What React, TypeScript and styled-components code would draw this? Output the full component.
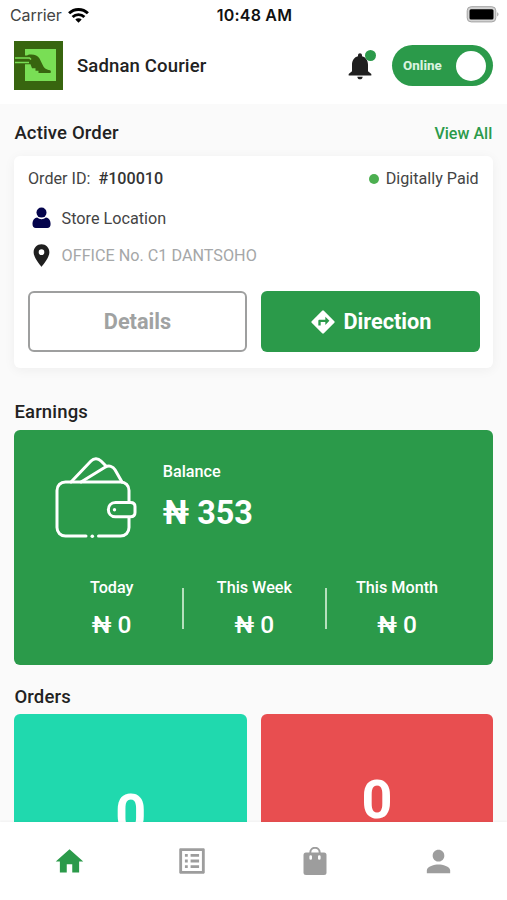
import React from 'react';
import styled, { createGlobalStyle } from 'styled-components';

const GREEN = '#2b9a4a';

const Global = createGlobalStyle`
  * { box-sizing: border-box; }
  html, body { margin: 0; padding: 0; background: #fafafa; }
  body { font-family: Roboto, "Noto Sans", sans-serif; color: #222; overflow: hidden; }
  button { font-family: inherit; margin: 0; padding: 0; cursor: pointer; }
  svg { display: block; flex: none; }
`;

const Screen = styled.div`
  width: 507px;
  height: 900px;
  display: flex;
  flex-direction: column;
  overflow: hidden;
  background: #fafafa;
`;

const StatusBar = styled.div`
  height: 30px;
  flex: none;
  display: grid;
  grid-template-columns: 1fr auto 1fr;
  align-items: center;
  padding: 0 8px 0 10px;
  background: #fff;
  font-family: Inter, sans-serif;
  font-size: 16px;
  line-height: 30px;
  color: #111;
`;

const Carrier = styled.div`
  display: flex;
  align-items: center;
  gap: 6px;
  color: #444;
  letter-spacing: -0.1px;
`;

const Clock = styled.div`
  font-weight: 600;
  letter-spacing: 0.2px;
`;

const BatterySlot = styled.div`
  justify-self: end;
  margin-top: -1px;
`;

const Header = styled.header`
  height: 74px;
  flex: none;
  display: flex;
  align-items: center;
  padding: 0 14px 3px 14px;
  background: #fff;
`;

const CourierName = styled.div`
  margin-left: 14px;
  flex: 1;
  font-size: 18.5px;
  font-weight: 500;
  line-height: 24px;
  letter-spacing: 0.15px;
`;

const BellButton = styled.button`
  position: relative;
  width: 32px;
  height: 32px;
  border: 0;
  background: none;
  margin-right: 16px;
`;

const BellDot = styled.span`
  position: absolute;
  top: 0;
  right: 0;
  width: 11px;
  height: 11px;
  border-radius: 50%;
  background: ${GREEN};
`;

const Toggle = styled.button`
  display: flex;
  align-items: center;
  justify-content: space-between;
  width: 101px;
  height: 41px;
  padding: 0 7px 0 11px;
  border: 0;
  border-radius: 21px;
  background: ${GREEN};
  color: #d9f2df;
  font-size: 13.4px;
  font-weight: 800;
`;

const Knob = styled.span`
  width: 30px;
  height: 30px;
  border-radius: 50%;
  background: #fff;
`;

const Content = styled.main`
  flex: 1;
  min-height: 0;
  overflow: hidden;
  padding: 0 13.7px 0 14.4px;
`;

const SectionHead = styled.div<{ $top: number; $bottom: number }>`
  display: flex;
  justify-content: space-between;
  align-items: center;
  height: 24px;
  padding-right: 1px;
  margin-top: ${(p) => p.$top}px;
  margin-bottom: ${(p) => p.$bottom}px;
`;

const SectionTitle = styled.h2`
  margin: 0;
  font-size: 18.5px;
  font-weight: 500;
  line-height: 24px;
  letter-spacing: 0.16px;
`;

const ViewAll = styled.a`
  font-size: 16.1px;
  font-weight: 500;
  color: ${GREEN};
`;

const OrderCard = styled.section`
  height: 212px;
  padding: 11px 13.4px 0 13.6px;
  border-radius: 6px;
  background: #fff;
  box-shadow: 0 2px 12px rgba(0, 0, 0, 0.05);
`;

const OrderTop = styled.div`
  display: flex;
  align-items: center;
  justify-content: space-between;
  height: 23px;
  padding-right: 1.2px;
  font-size: 16.15px;
  color: #444;
`;

const OrderId = styled.span`
  margin-left: 8px;
  font-weight: 500;
  color: #333;
`;

const Paid = styled.div`
  display: flex;
  align-items: center;
  gap: 7px;
`;

const PaidDot = styled.span`
  width: 10px;
  height: 10px;
  border-radius: 50%;
  background: #4caf50;
`;

const InfoRow = styled.div<{ $muted?: boolean; $top: number }>`
  display: flex;
  align-items: center;
  height: 24px;
  margin-top: ${(p) => p.$top}px;
  gap: 6.6px;
  font-size: 16.2px;
  color: ${(p) => (p.$muted ? '#a5a7a8' : '#444')};
`;

const Actions = styled.div`
  display: grid;
  grid-template-columns: 219px 219px;
  justify-content: space-between;
  margin-top: 24px;
`;

const Action = styled.button<{ $filled?: boolean }>`
  display: flex;
  align-items: center;
  justify-content: center;
  gap: 6px;
  height: 61px;
  border-radius: 6px;
  border: ${(p) => (p.$filled ? '0' : '2px solid #9e9f9f')};
  background: ${(p) => (p.$filled ? GREEN : '#fff')};
  color: ${(p) => (p.$filled ? '#fff' : '#a0a2a2')};
  font-size: 21.7px;
  font-weight: 700;
`;

const EarningsCard = styled.section`
  height: 235px;
  padding: 25px 26px 0 27px;
  border-radius: 6px;
  background: ${GREEN};
  color: #fff;
`;

const BalanceRow = styled.div`
  display: flex;
  height: 90px;
  padding-left: 11.400px;
  gap: 26px;
`;

const BalanceLabel = styled.div`
  margin-top: 7px;
  font-size: 16.2px;
  font-weight: 500;
  line-height: 20px;
`;

const BalanceValue = styled.div`
  margin-top: 11px;
  font-size: 32.4px;
  font-weight: 700;
  line-height: 40px;
`;

const Stats = styled.div`
  display: flex;
  align-items: center;
  margin-top: 28px;
  height: 70px;
`;

const Stat = styled.div`
  flex: 1;
  text-align: center;
`;

const StatLabel = styled.div`
  margin-top: 1px;
  font-size: 16.200px;
  font-weight: 500;
  line-height: 20px;
`;

const StatValue = styled.div`
  margin-top: 13px;
  font-size: 24.5px;
  font-weight: 500;
  line-height: 28px;
`;

const Divider = styled.div`
  width: 2px;
  height: 41px;
  background: #b5e0bd;
`;

const OrdersGrid = styled.div`
  display: grid;
  grid-template-columns: 232.500px 232.500px;
  justify-content: space-between;
`;

const OrdersTile = styled.div<{ $color: string; $top: number }>`
  height: 200px;
  padding-top: ${(p) => p.$top}px;
  border-radius: 6px;
  background: ${(p) => p.$color};
  color: #fff;
  font-size: 54px;
  font-weight: 700;
  line-height: 60px;
  text-align: center;
`;

const Nav = styled.nav`
  height: 78px;
  flex: none;
  display: grid;
  grid-template-columns: repeat(4, 123px);
  justify-content: center;
  background: #fff;
  box-shadow: 0 -1px 2px rgba(0, 0, 0, 0.04);
`;

const NavItem = styled.button<{ $active?: boolean }>`
  display: flex;
  justify-content: center;
  align-items: center;
  border: 0;
  background: none;
  color: ${(p) => (p.$active ? GREEN : '#9d9d9d')};
`;

const Icon = ({ d, size = 32, color = 'currentColor' }: { d: string; size?: number; color?: string }) => (
  <svg width={size} height={size} viewBox="0 0 24 24" fill={color} fillRule="evenodd">
    <path d={d} />
  </svg>
);

const BELL = 'M12 22c1.1 0 2-.9 2-2h-4c0 1.1.89 2 2 2zm6-6v-5c0-3.07-1.64-5.64-4.5-6.32V4c0-.83-.67-1.5-1.5-1.5s-1.5.67-1.5 1.5v.68C7.63 5.36 6 7.92 6 11v5l-2.500 2v1.200h17v-1.200l-2.500-2z';
const PIN = 'M12 2C8.13 2 5 5.13 5 9c0 5.25 7 13 7 13s7-7.75 7-13c0-3.87-3.13-7-7-7zm0 9.5a2.5 2.5 0 1 1 0-5 2.5 2.5 0 0 1 0 5z';
const DIRECTIONS = 'M21.71 11.29l-9-9a.996.996 0 0 0-1.41 0l-9 9a.996.996 0 0 0 0 1.41l9 9c.39.39 1.02.39 1.41 0l9-9a.996.996 0 0 0 0-1.41zM14 14.5V12h-4v3H8v-4c0-.55.45-1 1-1h5V7.5l3.5 3.5-3.5 3.5z';
const HOME = 'M10 20v-6h4v6h5v-8h3L12 3 2 12h3v8z';
const PERSON = 'M12 12c2.21 0 4-1.79 4-4s-1.79-4-4-4-4 1.79-4 4 1.79 4 4 4zm0 2c-2.67 0-8 1.34-8 4v2h16v-2c0-2.66-5.33-4-8-4z';
const LIST = 'M19 5v14H5V5h14m1.1-2H3.9c-.5 0-.9.4-.9.9v16.2c0 .4.4.9.9.9h16.2c.4 0 .9-.5.9-.9V3.9c0-.5-.5-.9-.9-.9zM11 7h6v2h-6V7zm0 4h6v2h-6v-2zm0 4h6v2h-6v-2zM7 7h2v2H7zm0 4h2v2H7zm0 4h2v2H7z';

const Logo = () => (
  <svg width="49" height="49" viewBox="0 0 49 49">
    <rect width="49" height="49" fill="#38650f" />
    <path d="M11 8h31v32H11z" fill="#79de55" />
    <path
      d="M0 14.500h13l2-1c5-.5 8.500.5 10.500 4l3.200 6.500c1.300 3 3 4.600 7.500 5.300.9.700.9 2.700 0 2.700H24.500v-2.200h-3v-2.600H18l-1.500-4H0z"
      fill="#38650f"
    />
    <path d="M1 17h14.500l1.500 1.500M1 21.500h14" stroke="#79de55" strokeWidth="1.500" fill="none" />
  </svg>
);

const Wifi = () => (
  <svg width="21" height="15" viewBox="0 0 21 15" fill="none" stroke="#000" strokeWidth="2.9">
    <path d="M1.1 5.3a13.4 13.4 0 0 1 18.8 0" />
    <path d="M4.6 9a8.4 8.4 0 0 1 11.8 0" />
    <path d="M10.5 14.8 7.3 11.6a4.5 4.5 0 0 1 6.4 0z" fill="#000" stroke="none" />
  </svg>
);

const Battery = () => (
  <svg width="33" height="17" viewBox="0 0 33 17">
    <rect x="1.200" y=".7" width="28.600" height="15.200" rx="4" fill="#d4d4d4" stroke="#a3a3a3" />
    <rect x="3.500" y="3.200" width="24" height="10.200" rx="1.500" fill="#000" />
    <path d="M31.300 6.200c1.500.6 1.500 3.600 0 4.200z" fill="#999" />
  </svg>
);

const StoreUser = () => (
  <svg width="27" height="24" viewBox="0 0 27 24" fill="#04044c">
    <path d="M9.2 11.4c-3.4.3-4.7 3.4-4.7 6.6 0 2.5 1.2 4 3.4 4h11.3c2.200 0 3.400-1.500 3.400-4 0-3.200-1.300-6.300-4.700-6.600a6.300 6.300 0 0 1-8.700 0z" />
    <circle cx="13.500" cy="6.600" r="5" />
  </svg>
);

const Wallet = () => (
  <svg width="84" height="84" viewBox="0 0 84 84" fill="none" stroke="#fff" strokeWidth="3" strokeLinecap="round" strokeLinejoin="round">
    <path d="M76 51v-15.500c0-5-3.500-8.500-8.500-8.500H12.500c-5 0-8.500 3.500-8.500 8.500V72.500c0 5 3.500 8.500 8.500 8.500H33M45.500 81h22c5 0 8.500-3.500 8.500-8.500V62" />
    <path d="M18 27 38 6c3-3.200 7-3 10 0l5 5M28 27l24-14.700c4-2.400 8-1 10 2.500L69 27" />
    <path d="M62.500 47.500h15c3 0 4.500 1.500 4.500 4v6c0 2.800-1.500 4.300-4.500 4.300h-15c-9.500 0-9.500-14.300 0-14.300z" fill={GREEN} />
    <circle cx="61.500" cy="54.700" r="1.700" fill="#fff" stroke="none" />
    <circle cx="39.300" cy="81.300" r="1.800" fill="#fff" stroke="none" />
  </svg>
);

const Bag = () => (
  <svg width="24" height="28" viewBox="0 0 24 28">
    <path d="M7.300 7V5.500a4.700 4.700 0 0 1 9.400 0V7" fill="none" stroke="currentColor" strokeWidth="2" />
    <rect x=".5" y="5.500" width="23" height="22.500" rx="2.500" fill="currentColor" />
    <path d="M7.700 9.500v2M16.300 9.500v2" stroke="#fff" strokeWidth="2.600" strokeLinecap="round" />
  </svg>
);

const stats = [
  { label: 'Today', value: '₦ 0' },
  { label: 'This Week', value: '₦ 0' },
  { label: 'This Month', value: '₦ 0' },
];

export default function App() {
  return (
    <Screen>
      <Global />
      <StatusBar>
        <Carrier>
          Carrier <Wifi />
        </Carrier>
        <Clock>10:48 AM</Clock>
        <BatterySlot>
          <Battery />
        </BatterySlot>
      </StatusBar>
      <Header>
        <Logo />
        <CourierName>Sadnan Courier</CourierName>
        <BellButton aria-label="Notifications">
          <Icon d={BELL} size={32} color="#1f1f1f" />
          <BellDot />
        </BellButton>
        <Toggle>
          Online
          <Knob />
        </Toggle>
      </Header>
      <Content>
        <SectionHead $top={17} $bottom={11}>
          <SectionTitle>Active Order</SectionTitle>
          <ViewAll>View All</ViewAll>
        </SectionHead>
        <OrderCard>
          <OrderTop>
            <div>
              Order ID:<OrderId>#100010</OrderId>
            </div>
            <Paid>
              <PaidDot />
              Digitally Paid
            </Paid>
          </OrderTop>
          <InfoRow $top={16}>
            <StoreUser />
            Store Location
          </InfoRow>
          <InfoRow $muted $top={13}>
            <Icon d={PIN} size={27} color="#1f1f1f" />
            OFFICE No. C1 DANTSOHO
          </InfoRow>
          <Actions>
            <Action>Details</Action>
            <Action $filled>
              <Icon d={DIRECTIONS} size={28} />
              Direction
            </Action>
          </Actions>
        </OrderCard>
        <SectionHead $top={32} $bottom={6}>
          <SectionTitle>Earnings</SectionTitle>
        </SectionHead>
        <EarningsCard>
          <BalanceRow>
            <Wallet />
            <div>
              <BalanceLabel>Balance</BalanceLabel>
              <BalanceValue>₦ 353</BalanceValue>
            </div>
          </BalanceRow>
          <Stats>
            {stats.map((s, i) => (
              <React.Fragment key={s.label}>
                {i > 0 && <Divider />}
                <Stat>
                  <StatLabel>{s.label}</StatLabel>
                  <StatValue>{s.value}</StatValue>
                </Stat>
              </React.Fragment>
            ))}
          </Stats>
        </EarningsCard>
        <SectionHead $top={20} $bottom={5}>
          <SectionTitle>Orders</SectionTitle>
        </SectionHead>
        <OrdersGrid>
          <OrdersTile $color="#20d9ae" $top={70}>0</OrdersTile>
          <OrdersTile $color="#e84e50" $top={56}>0</OrdersTile>
        </OrdersGrid>
      </Content>
      <Nav>
        <NavItem $active aria-label="Home">
          <Icon d={HOME} size={33} />
        </NavItem>
        <NavItem aria-label="Requests">
          <Icon d={LIST} size={34} />
        </NavItem>
        <NavItem aria-label="Orders">
          <Bag />
        </NavItem>
        <NavItem aria-label="Profile">
          <Icon d={PERSON} size={35} />
        </NavItem>
      </Nav>
    </Screen>
  );
}
